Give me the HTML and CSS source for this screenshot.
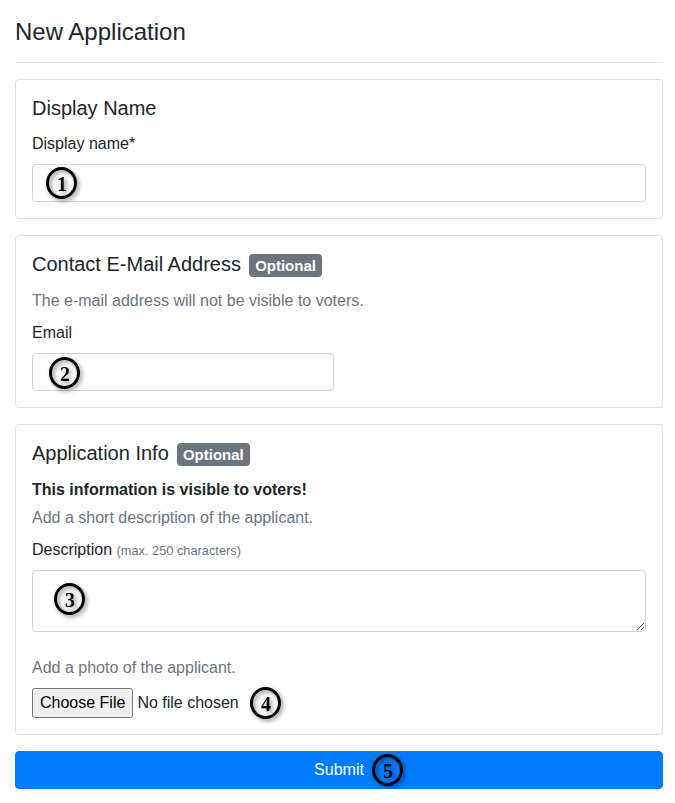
FILE: index.html
```html
<!DOCTYPE html>
<html lang="en">
<head>
<meta charset="utf-8">
<title>New Application</title>
<link rel="stylesheet" href="styles.css">
</head>
<body>
<main class="page">
<h1 class="page-title">New Application</h1>
<hr class="rule">
<form>
<section class="card">
<h2 class="card-title">Display Name</h2>
<label class="label" for="name">Display name*</label>
<div class="field"><input class="control" id="name" type="text"><span class="marker m1">1</span></div>
</section>
<section class="card">
<h2 class="card-title">Contact E-Mail Address <span class="badge">Optional</span></h2>
<p class="muted hint">The e-mail address will not be visible to voters.</p>
<label class="label" for="email">Email</label>
<div class="field half"><input class="control" id="email" type="email"><span class="marker m2">2</span></div>
</section>
<section class="card">
<h2 class="card-title">Application Info <span class="badge">Optional</span></h2>
<p class="notice">This information is visible to voters!</p>
<p class="muted hint">Add a short description of the applicant.</p>
<label class="label" for="desc">Description <small class="muted">(max. 250 characters)</small></label>
<div class="field"><textarea class="control area" id="desc"></textarea><span class="marker m3">3</span></div>
<p class="muted hint photo">Add a photo of the applicant.</p>
<div class="field file-field"><input class="file" type="file"><span class="marker m4">4</span></div>
</section>
<button class="submit" type="button">Submit<span class="marker m5">5</span></button>
</form>
</main>
</body>
</html>
```
FILE: styles.css
```css
* { box-sizing: border-box; }
body { margin: 0; background: #fff; color: #212529; font: 16px/24px "Liberation Sans", Arial, sans-serif; }
h1, h2, p { margin: 0; font-weight: 400; }
.page { padding: 17px 12px 0 15px; }
.page-title { font-size: 24px; line-height: 29px; }
.rule { margin: 16px 0; border: 0; border-top: 1px solid rgba(0,0,0,.1); }
.card { margin-bottom: 16px; padding: 16px; border: 1px solid rgba(0,0,0,.125); border-radius: 4px; }
.card-title { margin-bottom: 12px; font-size: 20px; line-height: 24px; }
.badge { display: inline-block; margin-left: 2.6px; padding: 4px 6px; border-radius: 4px; background: #6c757d; color: #fff; font-size: 15px; line-height: 15px; font-weight: 700; vertical-align: baseline; }
.muted { color: #6c757d; }
.hint { margin-bottom: 8px; }
.notice { margin-bottom: 4px; font-weight: 700; }
.label { display: block; height: 24px; margin-bottom: 8px; }
.label small { font-size: 12.8px; }
.field { position: relative; }
.half { width: 302px; }
.control { display: block; width: 100%; height: 38px; padding: 6px 12px; border: 1px solid #ced4da; border-radius: 4px; background: #fff; font: inherit; }
.area { height: 62px; margin-bottom: 24px; resize: vertical; }
.photo { margin-bottom: 8px; }
.file-field { height: 30px; }
.file { display: block; width: 100%; height: 30px; font: inherit; color: #212529; }
.file::file-selector-button { height: 30px; }
.submit { position: relative; display: block; width: 100%; height: 38px; padding: 6px 12px; border: 1px solid #007bff; border-radius: 4px; background: #007bff; color: #fff; font: inherit; }
.marker { position: absolute; display: block; width: 31px; height: 32px; border: 3px solid #000; border-radius: 50%; color: #000; font: 700 20px/29px "Liberation Serif", serif; text-align: center; text-indent: 1px; filter: drop-shadow(2px 2px 2px rgba(0,0,0,.45)); pointer-events: none; }
.m1 { left: 14px; top: 3px; }
.m2 { left: 17px; top: 4px; }
.m3 { left: 22px; top: 13px; }
.m4 { left: 218px; top: -1px; }
.m5 { left: 356px; top: 2px; }
```
